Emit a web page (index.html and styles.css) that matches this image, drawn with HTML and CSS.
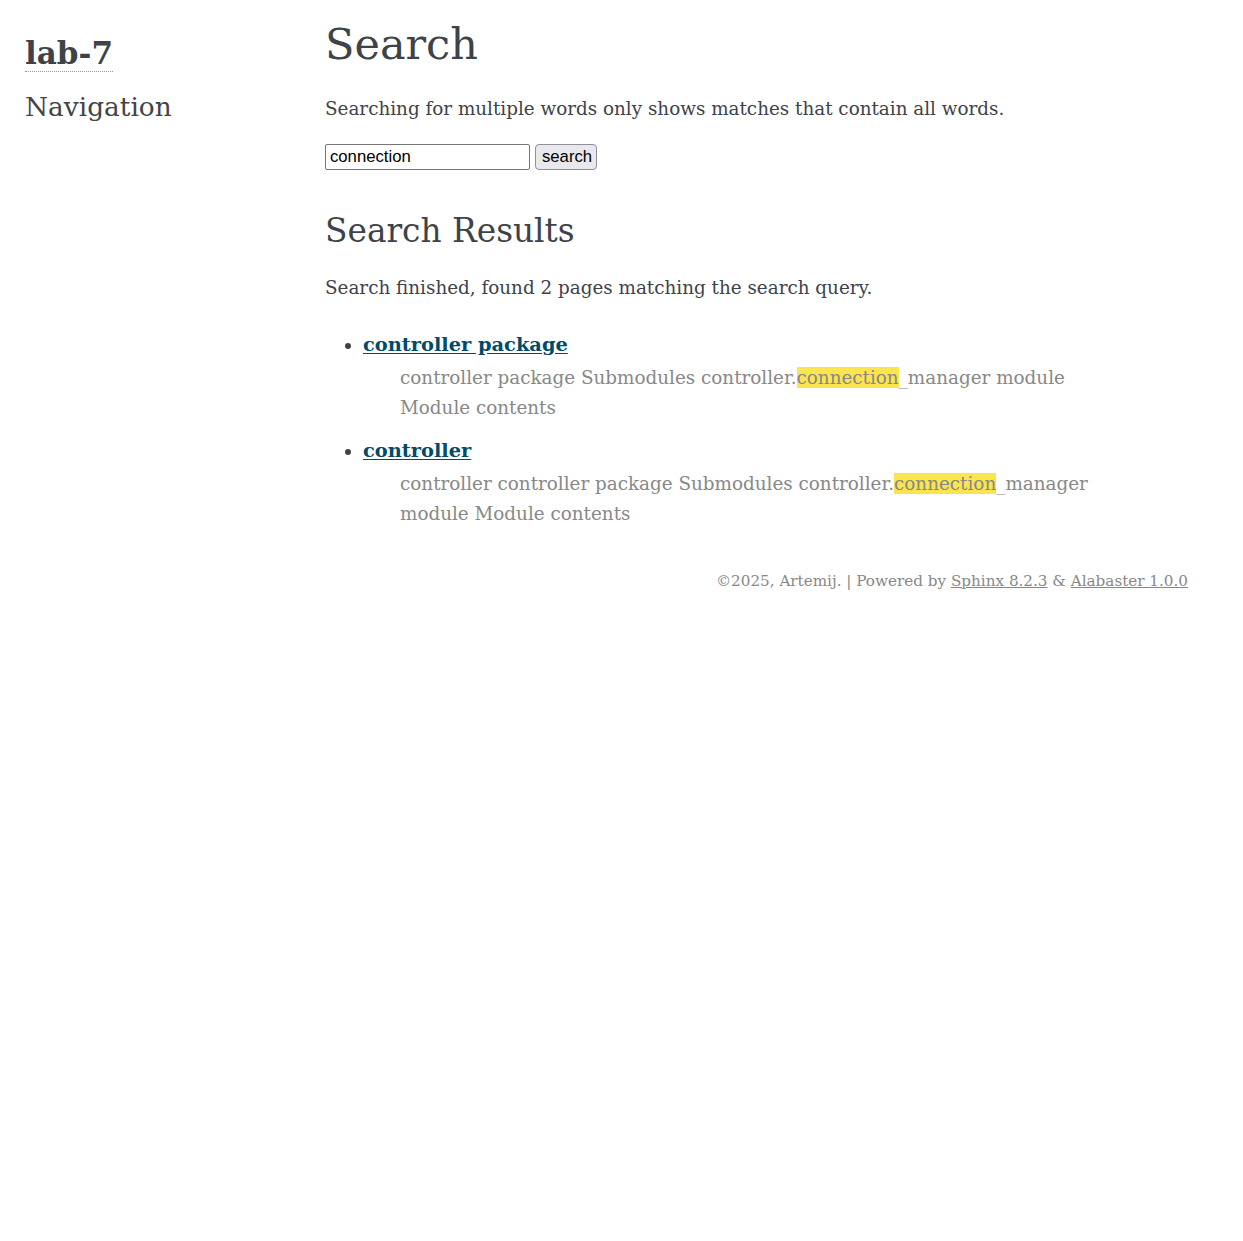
FILE: index.html
```html
<!DOCTYPE html>
<html lang="en">
<head>
<meta charset="utf-8">
<title>Search — lab-7</title>
<link rel="stylesheet" href="styles.css">
</head>
<body>
<div class="document">
  <div class="sidebar">
    <h1 class="logo"><a href="#">lab-7</a></h1>
    <h3 class="nav-title">Navigation</h3>
  </div>
  <div class="body">
    <h1 class="title">Search</h1>
    <p class="intro">Searching for multiple words only shows matches that contain all words.</p>
    <form class="search-form">
      <input class="search-input" type="text" name="q" value="connection">
      <button class="search-btn" type="button">search</button>
    </form>
    <h2 class="results-title">Search Results</h2>
    <p class="summary">Search finished, found 2 pages matching the search query.</p>
    <ul class="results">
      <li class="result">
        <a class="result-link" href="#">controller package</a>
        <p class="context">controller package Submodules controller.<span class="hl">connection</span>_manager module<br>Module contents</p>
      </li>
      <li class="result">
        <a class="result-link" href="#">controller</a>
        <p class="context">controller controller package Submodules controller.<span class="hl">connection</span>_manager<br>module Module contents</p>
      </li>
    </ul>
    <div class="footer">©2025, Artemij. | Powered by <a href="#">Sphinx 8.2.3</a> &amp; <a href="#">Alabaster 1.0.0</a></div>
  </div>
</div>
</body>
</html>
```
FILE: styles.css
```css
html, body {
  margin: 0;
  padding: 0;
  background: #fff;
}
body {
  font-family: "DejaVu Serif", Georgia, serif;
  color: #3E4349;
  font-size: 18.35px;
  line-height: 30px;
}
.document {
  display: flex;
  align-items: flex-start;
}
.sidebar {
  width: 300px;
  padding-left: 25px;
  padding-top: 33px;
}
.logo {
  margin: 0;
  font-size: 31px;
  line-height: 40px;
  font-weight: bold;
}
.logo a {
  color: #3E4349;
  text-decoration: none;
  border-bottom: 1px dotted #999;
}
.nav-title {
  margin: 14px 0 0 0;
  font-size: 26.4px;
  font-weight: normal;
  line-height: 40px;
  color: #444;
}
.body {
  width: 863px;
  padding-top: 14px;
}
.title {
  margin: 0;
  font-size: 43px;
  font-weight: normal;
  line-height: 60px;
}
.intro {
  margin: 20px 0 0 0;
}
.search-form {
  display: flex;
  gap: 5px;
  margin-top: 20px;
}
.search-input {
  box-sizing: border-box;
  width: 205px;
  height: 26px;
  padding: 1px 4px;
  font-family: "Liberation Sans", Arial, sans-serif;
  font-size: 16.7px;
  color: #000;
  border: 1px solid #767676;
  border-radius: 2px;
  background: #fff;
  margin: 0;
}
.search-btn {
  box-sizing: border-box;
  height: 26px;
  width: 62px;
  padding: 0 6px;
  font-family: "Liberation Sans", Arial, sans-serif;
  font-size: 16.7px;
  color: #000;
  background: #e9e9ed;
  border: 1px solid #8f8f9d;
  border-radius: 4px;
  margin: 0;
}
.results-title {
  margin: 41px 0 0 0;
  font-size: 32.8px;
  font-weight: normal;
  line-height: 40px;
}
.summary {
  margin: 22px 0 0 0;
}
.results {
  margin: 27px 0 0 0;
  padding: 0 0 0 38px;
}
.result {
  margin: 0 0 13px 0;
}
.result-link {
  color: #004B6B;
  font-weight: bold;
  font-size: 19.4px;
  text-decoration: underline;
  text-underline-offset: 2px;
}
.context {
  margin: 3px 0 0 37px;
  color: #888;
}
.hl {
  background-color: #fbe54e;
}
.footer {
  margin-top: 40px;
  text-align: right;
  font-size: 15.2px;
  line-height: 24px;
  color: #888;
}
.footer a {
  color: #888;
  text-decoration: underline;
}
```
